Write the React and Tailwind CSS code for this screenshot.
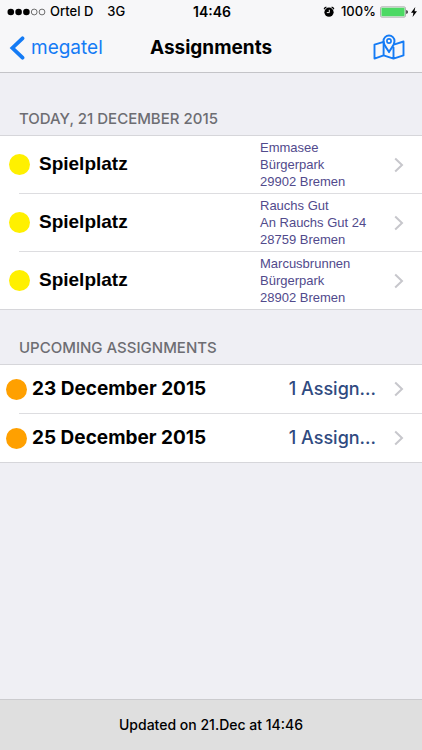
const today = [
  { id: 1, title: 'Spielplatz', address: ['Emmasee', 'Bürgerpark', '29902 Bremen'] },
  { id: 2, title: 'Spielplatz', address: ['Rauchs Gut', 'An Rauchs Gut 24', '28759 Bremen'] },
  { id: 3, title: 'Spielplatz', address: ['Marcusbrunnen', 'Bürgerpark', '28902 Bremen'] },
];

const upcoming = [
  { id: 1, date: '23 December 2015', count: '1 Assign...' },
  { id: 2, date: '25 December 2015', count: '1 Assign...' },
];

function Chevron() {
  return (
    <svg className="w-[10px] h-4 shrink-0" viewBox="0 0 10 16" fill="none" stroke="#c7c7cc" strokeWidth="2">
      <path d="M1.2 1.5 8 8 1.2 14.5" />
    </svg>
  );
}

function SignalDots() {
  return (
    <svg className="w-[39px] h-2" viewBox="0 0 39 8">
      <circle cx="3.8" cy="4" r="3.3" />
      <circle cx="11.6" cy="4" r="3.3" />
      <circle cx="19.4" cy="4" r="3.3" />
      <circle cx="27.2" cy="4" r="2.9" fill="none" stroke="#333" strokeWidth="0.7" />
      <circle cx="35" cy="4" r="2.9" fill="none" stroke="#333" strokeWidth="0.7" />
    </svg>
  );
}

function AlarmIcon() {
  return (
    <svg className="w-3 h-3" viewBox="0 0 12 12" fill="none">
      <path d="M1.2 3.2A3 3 0 0 1 3.4 1.2M10.8 3.2A3 3 0 0 0 8.6 1.2" stroke="#000" strokeWidth="1.3" />
      <circle cx="6" cy="6.2" r="4.6" fill="#000" />
      <path d="M3.8 6.6H6.3V3.8" stroke="#f7f7f8" strokeWidth="1" />
    </svg>
  );
}

function BatteryIcon() {
  return (
    <svg className="w-7 h-3" viewBox="0 0 28 12">
      <rect x="0.5" y="0.9" width="25" height="10.2" rx="1.4" fill="#fff" stroke="#8a8a8a" strokeWidth="0.7" />
      <rect x="1.4" y="1.8" width="23.2" height="8.4" rx="0.6" fill="#4cd964" />
      <path d="M26.4 4.1a2 2 0 0 1 0 3.8Z" />
    </svg>
  );
}

function BoltIcon() {
  return (
    <svg className="w-[6px] h-3" viewBox="0 0 6 12">
      <path d="M4.3 1 0 6.7h2.4L1.6 11 6 5.2H3.5Z" />
    </svg>
  );
}

function MapIcon() {
  return (
    <svg className="w-8 h-7" viewBox="0 0 32 28" fill="none" stroke="#147bf5" strokeWidth="1.9" strokeLinejoin="round" strokeLinecap="round">
      <path d="M10.6 7.8 1.5 10.6v14l9.1-3.2 9.9 3.2 10-3.2V7.5l-8.9 2.8M10.6 9v12.4M20.5 13.5v11" />
      <path d="M16 18.2c-1.7-3.8-5.5-6.5-5.5-11.2a5.500 5.500 0 0 1 11 0c0 4.700-3.800 7.400-5.500 11.200Z" />
      <circle cx="16" cy="7" r="2.1" strokeWidth="1.6" />
    </svg>
  );
}

function SectionTitle({ children }) {
  return <h2 className="px-[19px] text-[15px] leading-5 font-medium text-[#6d6d72]">{children}</h2>;
}

export default function App() {
  return (
    <div className="min-h-screen flex flex-col bg-[#efeff4] text-black font-['Inter',sans-serif]">
      <header className="bg-[#f7f7f9] border-b border-[#c4c4c8]">
        <div className="h-6 pl-[7px] pr-[5px] grid grid-cols-[1fr_auto_1fr] items-center text-[13px] font-medium">
          <div className="flex items-center">
            <SignalDots />
            <span className="ml-1">Ortel D</span>
            <span className="ml-[14px]">3G</span>
          </div>
          <div className="text-sm font-semibold">14:46</div>
          <div className="flex items-center justify-end">
            <AlarmIcon />
            <span className="ml-[6px] mr-1">100%</span>
            <BatteryIcon />
            <span className="ml-[3px]"><BoltIcon /></span>
          </div>
        </div>
        <div className="h-12 grid grid-cols-[1fr_auto_1fr] items-center">
          <a href="#back" className="pl-[9px] flex items-center gap-[6px] text-[19px] text-[#147bf5]">
            <svg className="w-4 h-6" viewBox="0 0 16 24" fill="none" stroke="currentColor" strokeWidth="3.8" strokeLinecap="round">
              <path d="M13.5 2.3 3.4 12l10.1 9.7" />
            </svg>
            megatel
          </a>
          <h1 className="text-[19px] font-bold">Assignments</h1>
          <button type="button" aria-label="Map" className="justify-self-end mr-[17px]">
            <MapIcon />
          </button>
        </div>
      </header>

      <main className="flex-1">
        <div className="pt-9 pb-[6px]">
          <SectionTitle>TODAY, 21 DECEMBER 2015</SectionTitle>
        </div>
        <ul className="bg-white border-y border-[#d6d6da] font-['Liberation_Sans',Arial,sans-serif]">
          {today.map((item, i) => (
            <li key={item.id}>
              {i > 0 && <div className="ml-[19px] border-t border-[#dddde0]" />}
              <a href="#assignment" className="flex items-center pl-[9px] pr-[18px] py-[3px]">
                <span className="size-[21px] rounded-full bg-[#fff000] shrink-0" />
                <span className="ml-[9px] flex-1 text-[19px] font-bold">{item.title}</span>
                <span className="w-[134px] text-[13px] leading-[17px] text-[#514a8c]">
                  {item.address.map((line) => (
                    <span key={line} className="block">{line}</span>
                  ))}
                </span>
                <Chevron />
              </a>
            </li>
          ))}
        </ul>

        <div className="pt-7 pb-[6px]">
          <SectionTitle>UPCOMING ASSIGNMENTS</SectionTitle>
        </div>
        <ul className="bg-white border-y border-[#d6d6da]">
          {upcoming.map((item, i) => (
            <li key={item.id}>
              {i > 0 && <div className="ml-[19px] border-t border-[#dddde0]" />}
              <a href="#day" className="h-12 flex items-center pl-[6px] pr-[18px]">
                <span className="size-[21px] rounded-full bg-[#ffa000] shrink-0" />
                <span className="ml-[5px] flex-1 text-[19px] font-bold">{item.date}</span>
                <span className="mr-[18px] text-lg font-medium text-[#2f4a80]">{item.count}</span>
                <Chevron />
              </a>
            </li>
          ))}
        </ul>
      </main>

      <footer className="h-[51px] flex items-center justify-center bg-[#dfdfdf] border-t border-[#cbcbce] text-sm font-medium">
        Updated on 21.Dec at 14:46
      </footer>
    </div>
  );
}
